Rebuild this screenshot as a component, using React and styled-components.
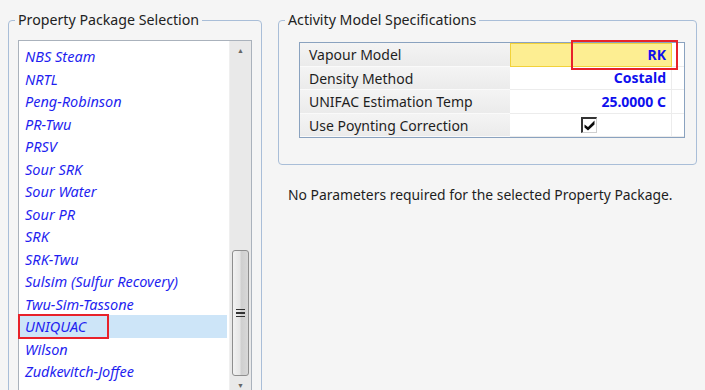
import React from "react";
import styled, { createGlobalStyle } from "styled-components";

const GlobalStyle = createGlobalStyle`
  html, body {
    margin: 0;
    padding: 0;
    background: #f5f5f5;
    overflow: hidden;
  }
  body {
    font-family: "Noto Sans", "Open Sans", sans-serif;
    color: #1e1e1e;
  }
`;

const packages = [
  "NBS Steam",
  "NRTL",
  "Peng-Robinson",
  "PR-Twu",
  "PRSV",
  "Sour SRK",
  "Sour Water",
  "Sour PR",
  "SRK",
  "SRK-Twu",
  "Sulsim (Sulfur Recovery)",
  "Twu-Sim-Tassone",
  "UNIQUAC",
  "Wilson",
  "Zudkevitch-Joffee"
];

const specs = [
  { label: "Vapour Model", value: "RK", active: true },
  { label: "Density Method", value: "Costald" },
  { label: "UNIFAC Estimation Temp", value: "25.0000 C" },
  { label: "Use Poynting Correction", check: true }
];

const Page = styled.div`
  display: flex;
  gap: 16px;
  padding: 11px 8px 0 8px;
  height: 390px;
  box-sizing: border-box;
`;

const Group = styled.fieldset`
  margin: 0;
  border: 1px solid #a9bed8;
  border-radius: 4px;
  padding: 0;
  box-sizing: border-box;
  width: ${p => p.$width}px;
  height: ${p => p.$height}px;
  min-width: 0;
`;

const Legend = styled.legend`
  padding: 0 3px;
  margin-left: 6px;
  font-size: 14.2px;
  line-height: 18px;
  color: #222;
`;

const GroupBody = styled.div`
  padding: ${p => p.$pad};
`;

const ListBox = styled.div`
  display: flex;
  height: 352px;
  border: 1px solid #aab2bc;
  background: #fff;
`;

const Items = styled.ul`
  flex: 1;
  list-style: none;
  margin: 0;
  padding: 4px 2px 0 0;
`;

const Item = styled.li`
  position: relative;
  height: 22.5px;
  line-height: 22px;
  padding-left: 6px;
  font-style: italic;
  font-size: 14.5px;
  color: #1f1ff0;
  background: ${p => (p.$selected ? "#cde5f8" : "transparent")};
  white-space: nowrap;
`;

const Mark = styled.span`
  position: absolute;
  left: -1px;
  top: -1px;
  bottom: -1px;
  width: ${p => p.$w}px;
  border: 2.5px solid #e8222a;
  box-sizing: border-box;
`;

const ScrollBar = styled.div`
  width: 21px;
  display: flex;
  flex-direction: column;
  background: #e9e9e9;
  border-left: 1px solid #efefef;
`;

const Arrow = styled.div`
  height: 18px;
  display: flex;
  align-items: center;
  justify-content: center;
  color: #666;
  font-size: 7px;
  flex: none;
`;

const Track = styled.div`
  flex: 1;
  padding-top: 191px;
  display: flex;
  justify-content: center;
`;

const Thumb = styled.div`
  width: 17px;
  height: 126px;
  box-sizing: border-box;
  border: 1px solid #8e8e8e;
  border-radius: 3px;
  background: linear-gradient(to right, #f2f2f2 0%, #e6e6e6 45%, #cfcfcf 55%, #d8d8d8 100%);
  display: flex;
  flex-direction: column;
  align-items: center;
  justify-content: center;
  gap: 2px;
`;

const Grip = styled.span`
  width: 9px;
  height: 1.5px;
  background: #333;
`;

const Right = styled.div`
  display: flex;
  flex-direction: column;
`;

const Grid = styled.div`
  width: 384px;
  border: 1px solid #8aa2bf;
  background: #fff;
  display: grid;
  grid-template-columns: 210px 162px 1fr;
  grid-auto-rows: 23.5px;
`;

const Label = styled.div`
  padding-left: 9px;
  font-size: 14px;
  line-height: 23px;
  background: linear-gradient(to bottom, #f4f4f4, #ebebeb);
  border-bottom: 1px solid #fafafa;
  box-sizing: border-box;
  white-space: nowrap;
`;

const Value = styled.div`
  position: relative;
  display: flex;
  align-items: center;
  justify-content: ${p => (p.$center ? "flex-start" : "flex-end")};
  padding: ${p => (p.$center ? "0 0 0 71px" : "0 5px 0 0")};
  font-size: 14px;
  font-weight: bold;
  color: #1010ee;
  border-right: 1px solid #ececec;
  border-bottom: 1px solid #ececec;
  box-sizing: border-box;
  background: ${p => (p.$active ? "#fdee92" : "#fff")};
  outline: ${p => (p.$active ? "1px solid #f2d23a" : "none")};
  outline-offset: -1px;
`;

const Filler = styled.div`
  border-bottom: 1px solid #ececec;
`;

const RedBox = styled.span`
  position: absolute;
  z-index: 1;
  left: 61px;
  right: -7px;
  top: -3px;
  bottom: -4px;
  border: 2.5px solid #e8222a;
`;

const CheckBox = styled.span`
  width: 16px;
  height: 16px;
  box-sizing: border-box;
  border-style: solid;
  border-width: 2px 1px 1px 2px;
  border-color: #333 #cfcfcf #cfcfcf #333;
  background: #fff;
  display: flex;
  align-items: center;
  justify-content: center;
`;

const Note = styled.p`
  margin: 20px 0 0 10px;
  font-size: 13.9px;
  color: #1e1e1e;
`;

function Check() {
  return (
    <svg width="11" height="11" viewBox="0 0 11 11">
      <path d="M0.5 4.5 L4 7 L10.5 0.5 L10.5 4.5 L4 10.5 L0.5 7.5 Z" fill="#0a0a0a" />
    </svg>
  );
}

export default function App() {
  return (
    <>
      <GlobalStyle />
      <Page>
        <Group $width={254} $height={400}>
          <Legend>Property Package Selection</Legend>
          <GroupBody $pad="11px 9px 0 9px">
            <ListBox>
              <Items>
                {packages.map(p => (
                  <Item key={p} $selected={p === "UNIQUAC"}>
                    {p}
                    {p === "UNIQUAC" && <Mark $w={91} />}
                  </Item>
                ))}
              </Items>
              <ScrollBar>
                <Arrow>▲</Arrow>
                <Track>
                  <Thumb>
                    <Grip />
                    <Grip />
                    <Grip />
                  </Thumb>
                </Track>
                <Arrow>▼</Arrow>
              </ScrollBar>
            </ListBox>
          </GroupBody>
        </Group>
        <Right>
          <Group $width={419} $height={154}>
            <Legend>Activity Model Specifications</Legend>
            <GroupBody $pad="13px 14px 0 20px">
              <Grid>
                {specs.map(s => (
                  <React.Fragment key={s.label}>
                    <Label>{s.label}</Label>
                    <Value $active={s.active} $center={s.check}>
                      {s.check ? (
                        <CheckBox>
                          <Check />
                        </CheckBox>
                      ) : (
                        s.value
                      )}
                      {s.active && <RedBox />}
                    </Value>
                    <Filler />
                  </React.Fragment>
                ))}
              </Grid>
            </GroupBody>
          </Group>
          <Note>No Parameters required for the selected Property Package.</Note>
        </Right>
      </Page>
    </>
  );
}
